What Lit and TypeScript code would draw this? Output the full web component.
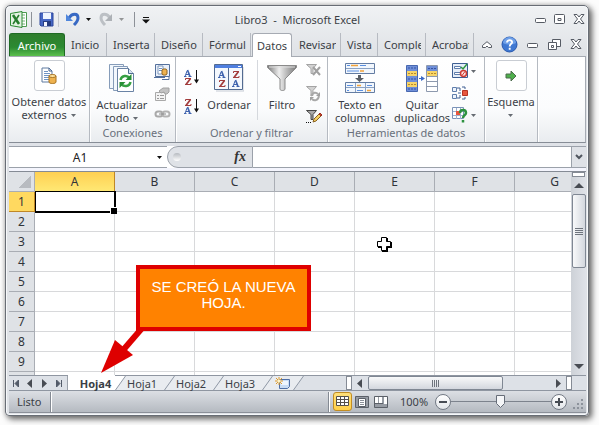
import { LitElement, html, css, svg, nothing } from "lit";
import { customElement } from "lit/decorators.js";
import { classMap } from "lit/directives/class-map.js";

const icon = (w: number, h: number, body: unknown) =>
  html`<svg width=${w} height=${h} viewBox="0 0 ${w} ${h}" aria-hidden="true">${body}</svg>`;

const caret = icon(7, 7, svg`<path d="M1 2h5L3.500 5z" fill="#666b72" />`);
const caretDark = icon(7, 7, svg`<path d="M1 2h5L3.500 5z" fill="#111" />`);

// Serif A: thin left leg, heavy right leg, small feet.
const letterA = (x: number, y: number) => svg`<g transform="translate(${x} ${y})" fill="none" stroke="#3f63ae">
  <path d="M1 6.500L3 1" /><path d="M3.500 0L6 6.500" stroke-width="1.700" /><path d="M0 6.500h2.500M4.500 6.500h3M2 4.500h3" /></g>`;
const letterZ = (x: number, y: number) => svg`<g transform="translate(${x} ${y})" fill="none" stroke="#a23c3c">
  <path d="M.5 2V.500H6" /><path d="M5.500.5L1 6.500" stroke-width="1.700" /><path d="M0 6.500h6V5" /></g>`;

const excelLogo = icon(17, 17, svg`
  <path d="M5 1.500h11.500v14H5z" fill="#fff" stroke="#4d9a50" />
  <path d="M12 4h3M12 7h3M12 10h3M12 13h3" stroke="#74b277" />
  <path d="M.5 2.500L12 .5v16L.5 14.500z" fill="#e4f2e3" stroke="#2f8b35" />
  <path d="M3 4l6 9" stroke="#277c2d" stroke-width="2.600" /><path d="M9 4L3 13" stroke="#277c2d" stroke-width="1.600" />`);
const save = icon(15, 15, svg`
  <path d="M1 1h13v13H2l-1-1z" fill="#4667c4" stroke="#2d479b" />
  <path d="M4 1h8v6H4z" fill="#eef4ff" /><path d="M4 9h8v5H4z" fill="#263c80" />
  <path d="M5 10h3v4H5z" fill="#f3f6ff" />`);
const undo = icon(14, 15, svg`
  <path d="M3 6C6 1 12 1 12 6c0 3-2 5-4 7" fill="none" stroke="#3869c4" stroke-width="3" />
  <path d="M0 2v7h7z" fill="#4f86dc" />`);
const redo = icon(14, 15, svg`
  <path d="M11 6C8 1 2 1 2 6c0 3 2 5 4 7" fill="none" stroke="#bcc0c5" stroke-width="3" />
  <path d="M13 2v7H6z" fill="#adb1b6" />`);
const customize = icon(8, 8, svg`<path d="M1 1.500h6" stroke="#111" /><path d="M0 3.500h8L4 7.500z" fill="#111" />`);

const cross = icon(12, 11, svg`
  <path d="M1 .5h3l2 2.500 2-2.500h3L7.500 5l3.500 4.500H8L6 7 4 9.500H1L4.500 5z" fill="#fff" stroke="#565b64" />`);
const minimize = icon(12, 11, svg`<rect x=".5" y="4.500" width="10" height="4" rx="1" fill="#fff" stroke="#565b64" />`);
const maximize = icon(12, 11, svg`
  <rect x=".5" y=".5" width="10" height="9" rx="1" fill="#fff" stroke="#565b64" /><path d="M4 4.500h3v2H4z" fill="#fff" stroke="#565b64" />`);
const restore = icon(13, 12, svg`
  <path d="M4.500.5h8v7h-8z" fill="#fff" stroke="#565b64" /><path d="M.5 3.500h8v7h-8z" fill="#fff" stroke="#565b64" />
  <path d="M3.500 6.500h2v2h-2z" fill="none" stroke="#565b64" />`);
const collapse = icon(10, 8, svg`<path d="M.5 6.500V4.500L5 .7l4.500 3.800v2h-3L5 5 3.500 6.500z" fill="#fff" stroke="#565b64" />`);
const help = icon(17, 17, svg`
  <circle cx="8.500" cy="8.500" r="7.500" fill="#3f78d2" stroke="#2858ad" />
  <path d="M2 7a6.500 6 0 0113 0c-4 2-9 2-13 0" fill="#6fa0e8" />
  <path d="M6 6.500c0-3.300 5.500-3 5 0C10.700 8 8.700 8 8.700 10.500M8.700 11.800v2" fill="none" stroke="#fff" stroke-width="1.900" />`);

const getData = icon(16, 18, svg`
  <path d="M1 1h7l3 3v11H1z" fill="#fff" stroke="#5f7ba0" /><path d="M8 1v3h3" fill="none" stroke="#3f5f8c" />
  <path d="M3 4.500h4M3 6.500h6M3 8.500h5M3 10.500h5M3 12.500h5" stroke="#6e93c4" />
  <path d="M8 9v6c0 2 7 2 7 0V9" fill="#eeb24f" stroke="#a87321" /><ellipse cx="11.500" cy="9" rx="3.500" ry="1.500" fill="#ffe3a0" stroke="#a87321" />`);
const refreshAll = icon(28, 30, svg`
  <path d="M1.500 1.500h14v24h-14z" fill="#f2f7fc" stroke="#869cb9" /><path d="M5.500 3.500h14v24h-14z" fill="#f2f7fc" stroke="#869cb9" />
  <path d="M9.500 5.500h11l5 5v18h-16z" fill="#fff" stroke="#6a83a5" /><path d="M20.500 5.500v5h5" fill="#d7e3f0" stroke="#4e6a90" />
  <path d="M12.500 17c1-5 7-5 9-2M22.500 19c-1 5-7 5-9 2" fill="none" stroke="#36a042" stroke-width="2.400" />
  <path d="M23.500 11v6h-6zM11.500 25v-6h6z" fill="#278f35" />`);
const connections = icon(17, 17, svg`
  <path d="M1.500 1.500h14v12h-14z" fill="#e9f0fa" stroke="#54709c" /><path d="M0 14.500h11M8 16.500h7v-3" fill="none" stroke="#54709c" />
  <path d="M4 3h5v8H4z" fill="#fff" stroke="#7d96ba" /><path d="M5 5.500h3M5 7.500h3" stroke="#6e93c4" />
  <path d="M8 7v4c0 1.500 5 1.500 5 0V7c0-1.500-5-1.500-5 0" fill="#eeb24f" stroke="#8f6420" />`);
const properties = icon(17, 15, svg`
  <path d="M1.500 5.500h10v8h-10z" fill="#f3f3f3" stroke="#a9a9a9" /><path d="M3 8.500h2M6 8.500h4M3 11.500h2M6 11.500h4" stroke="#999" />
  <path d="M5 4l4-3h6v4l-2 2h-2l-1-2-3 1z" fill="#c3c3c3" stroke="#a2a2a2" />`);
const links = icon(17, 10, svg`
  <rect x="1.500" y="2.500" width="7" height="5" rx="2.500" fill="none" stroke="#a9a9a9" stroke-width="2" />
  <rect x="8.500" y="2.500" width="7" height="5" rx="2.500" fill="none" stroke="#b3b3b3" stroke-width="2" /><path d="M5 5h7" stroke="#888" />`);
const arrowDown = svg`<path d="M12.500 1v12" stroke="#111" /><path d="M10 10.500h5l-2.500 4z" fill="#111" />`;
const sortAsc = icon(17, 17, svg`${letterA(0, 1)}${letterZ(1, 9)}${arrowDown}`);
const sortDesc = icon(17, 17, svg`${letterZ(1, 1)}${letterA(0, 9)}${arrowDown}`);
const sort = icon(30, 28, svg`
  <path d="M2 27h28V3" fill="none" stroke="#c5cbd4" />
  <path d="M.5.5h28v25H.5z" fill="#f4f8fd" stroke="#536b91" /><path d="M1 1h27v3H1z" fill="#4f7fe0" /><path d="M24 2.500h3" stroke="#fff" />
  <path d="M14.500 4v21" stroke="#536b91" />${letterA(4, 7)}${letterZ(5, 16)}${letterZ(19, 7)}${letterA(18, 16)}`);
const filter = icon(31, 27, svg`
  <defs><linearGradient id="fu"><stop offset="0" stop-color="#777" /><stop offset=".4" stop-color="#eee" /><stop offset="1" stop-color="#777" /></linearGradient></defs>
  <path d="M.5.500h29v2L18 14v10c0 2-5 2-5 0V14L.5 2.500z" fill="url(#fu)" stroke="#8a8a8a" />
  <path d="M2 2h26" stroke="#ddd" />`);
const miniFunnel = (c: string, f: string) => svg`<path d="M.5 1.500h10L7 5.500v5H5v-5z" fill="${f}" stroke="${c}" />`;
const filterClear = icon(16, 15, svg`${miniFunnel("#a4a4a4", "#d2d2d2")}<path d="M7 4l7 8M14 4l-7 8" stroke="#a0a0a0" stroke-width="2" />`);
const filterAgain = icon(16, 17, svg`${miniFunnel("#a4a4a4", "#d2d2d2")}
  <path d="M5 11c2-4 5-4 7-2M13 11c-1 5-5 5-7 3" fill="none" stroke="#a8a8a8" stroke-width="2" /><path d="M14 7v4h-4zM4 16v-4h4z" fill="#a0a0a0" />`);
const filterAdvanced = icon(17, 15, svg`${miniFunnel("#444", "#aaa")}
  <path d="M0 13.500h1M2 13.500h1M4 13.500h1" stroke="#111" /><path d="M7 13l1-3 5-5 2 2-5 5z" fill="#f4ce62" stroke="#8a6423" />
  <path d="M13 5l1-1 2 2-1 1z" fill="#c8462e" stroke="#a03020" />`);
const textColumns = icon(31, 31, svg`
  <path d="M.5.5h29v10H.5zM.5 19.500h29v10H.5z" fill="#f2f7fd" stroke="#647da3" /><path d="M1 5.500h28M1 24.500h28M10.500 20v9M20.500 20v9" stroke="#8ba2c3" />
  <path d="M2 2.500h3M15 2.500h6M2 8h12" stroke="#5a8fe0" /><path d="M6 2.500h7M15 8h4" stroke="#f2a33a" stroke-width="1.500" />
  <path d="M2 22.500h6M22 22.500h5M12 27.500h6M2 27.500h2" stroke="#5a8fe0" /><path d="M12 22.500h4M22 27.500h4" stroke="#f2a33a" stroke-width="1.500" />
  <path d="M13 12h3v3h3l-4.500 4L10 15h3z" fill="#5a5f66" />`);
const dedupe = icon(33, 27, svg`
  <path d="M.5.500h11v26H.5z" fill="#6f8fd8" stroke="#4868b0" /><path d="M1 6h10v5H1zM1 17h10v5H1z" fill="#f8d568" />
  <path d="M2 3h8M2 14h8M2 24h8" stroke="#3552a4" stroke-dasharray="2 1" /><path d="M2 8.500h8M2 19.500h8" stroke="#b98d2c" stroke-dasharray="2 1" />
  <path d="M13 13.500h3" stroke="#3a6ac8" /><path d="M15 11l4 2.500-4 2.500z" fill="#3a6ac8" />
  <path d="M20.500.5h11v26h-11z" fill="#fff" stroke="#8d99ae" /><path d="M21 1h10v5H21z" fill="#6f8fd8" /><path d="M21 6h10v5H21z" fill="#f8d568" />
  <path d="M22 3.500h8" stroke="#3552a4" stroke-dasharray="2 1" /><path d="M22 8.500h8" stroke="#b98d2c" stroke-dasharray="2 1" />
  <path d="M21 11.500h10M21 16.500h10M21 21.500h10" stroke="#8d99ae" />`);
const validation = icon(16, 16, svg`
  <path d="M.5.5h15v14H.5z" fill="#e6eef8" stroke="#3e5f92" /><path d="M2.500 3.500h6v2h-6zM2.500 9.500h6v2h-6z" fill="#fff" stroke="#5f7eac" />
  <path d="M9 4l2 2 4-5" fill="none" stroke="#2e9940" stroke-width="1.500" /><circle cx="11.500" cy="10.500" r="3" fill="#fbe3e0" stroke="#cf3a30" stroke-width="1.500" /><path d="M10 12.500l3-4" stroke="#cf3a30" />`);
const consolidate = icon(16, 14, svg`
  <path d="M.5 1.500h4v4h-4zM.5 8.500h4v4h-4z" fill="#eef4fc" stroke="#5f7eac" /><path d="M5 2h3v3M5 12h3V9M6 7h3" fill="none" stroke="#3e5f92" />
  <path d="M10.500 4.500h5v5h-5z" fill="#e8573f" stroke="#b53424" /><path d="M10 1h3v2M10 13h3v-2" fill="none" stroke="#3e5f92" />`);
const whatIf = icon(16, 16, svg`
  <path d="M.5.500h11v11H.5z" fill="#fff" stroke="#7b93b8" /><path d="M1 4.500h10M1 8.500h10M4.500 1v11M8.500 1v11" stroke="#9db0cc" /><path d="M4 4h4v4H4z" fill="#e8573f" />
  <path d="M8 6c0-4 6-4 6 0 0 2-3 2-3 5M11 13v2.500" fill="none" stroke="#2d9240" stroke-width="2.500" />`);
const outline = icon(12, 12, svg`<path d="M1 4h5V1l5 5-5 5V8H1z" fill="#4fb04c" stroke="#4c6b4c" />`);
const newSheet = icon(17, 13, svg`
  <path d="M4.500 2.500h10v7l-2 2h-8z" fill="#c9dcf5" stroke="#4f6ea6" /><path d="M6 4h7v4H6z" fill="#eef5ff" />
  <path d="M4 0v8M0 4h8M1 1l6 6M7 1L1 7" stroke="#e09a28" /><circle cx="4" cy="4" r="1.500" fill="#fff6c8" />`);

const tri = (dir: "left" | "right" | "up" | "down") => {
  const d = { left: "M7 1v9L2 5.500z", right: "M3 1v9l5-4.500z", up: "M0 8h10L5 3z", down: "M0 3h10L5 8z" }[dir];
  return icon(10, 11, svg`<path d="${d}" fill="#484c53" />`);
};
const edge = (dir: "first" | "last") => icon(10, 11, dir === "first"
  ? svg`<path d="M2.500 2v7M7.500 2v7L4 5.500z" fill="#535b69" stroke="#535b69" />`
  : svg`<path d="M7.500 2v7M2.500 2v7L6 5.500z" fill="#535b69" stroke="#535b69" />`);
const slash = (left: string, right: string) => icon(11, 14, svg`
  <path d="M0 0h11L1 14H0z" fill="${left}" /><path d="M11 0v14H1z" fill="${right}" /><path d="M.5 14L10.500 0" stroke="#8f98a5" />`);

const viewNormal = icon(17, 17, svg`
  <path d="M2.500 3.500h12v9h-12z" fill="#fff" stroke="#55504a" /><path d="M3 6.500h12M3 9.500h12M6.500 4v9M10.500 4v9" stroke="#55504a" />`);
const viewLayout = icon(14, 12, svg`
  <path d="M.5.500h13v11H.5z" fill="#979ca4" stroke="#5b6068" /><path d="M3.500 2.500h7v8h-7z" fill="#fff" stroke="#5b6068" /><path d="M5 4.500h4M5 6.500h4M5 8.500h4" stroke="#8b9098" />`);
const viewBreaks = icon(14, 12, svg`
  <path d="M.5.500h13v11H.5z" fill="#979ca4" stroke="#5b6068" /><path d="M1 1h3v6H1zM5 1h3v6H5zM10 1h3v7h-3z" fill="#fff" /><path d="M1 7.500h8" stroke="#5b6068" />`);

const columns = ["A", "B", "C", "D", "E", "F", "G"];
const rows = Array.from({ length: 10 }, (_, i) => i + 1);
const tabs = [
  { label: "Inicio", size: "narrow" }, { label: "Insertar", size: "wide" }, { label: "Diseño", size: "wide" },
  { label: "Fórmul", size: "wide" }, { label: "Datos", size: "active" }, { label: "Revisar", size: "wide" },
  { label: "Vista", size: "small" }, { label: "Comple", size: "wide" }, { label: "Acrobat", size: "wide" },
];
const sheets = ["Hoja1", "Hoja2", "Hoja3"];

@customElement("app-root")
export class AppRoot extends LitElement {
  static styles = css`
    :host { display: block; height: 100vh; box-sizing: border-box; padding: 5px 10px 9px 5px; background: #fcfcfc;
      font: 11px/13px "Noto Sans", "Open Sans", sans-serif; color: #3b3f46; overflow: hidden; }
    * { box-sizing: border-box; }
    svg { display: block; flex: none; }
    button, input { font: inherit; color: inherit; border: 0; background: none; padding: 0; margin: 0; border-radius: 0; outline: 0; }
    button { display: flex; align-items: center; justify-content: center; flex: none; }
    .window { height: 100%; display: flex; flex-direction: column; border: 1px solid #686d75; border-radius: 5px 5px 4px 4px;
      padding: 0 2px 2px 3px; background: linear-gradient(#f0f2f4, #dfe2e6 50px, #dfe2e7); box-shadow: inset 0 0 0 1px #f6f8fa, 3px 3px 6px #666, 0 0 5px #bbb; }
    .title { height: 27px; display: grid; grid-template-columns: 1fr auto 1fr; align-items: center; flex: none; }
    .title h1 { font: inherit; margin: 0; white-space: pre; }
    .quick { display: flex; align-items: center; padding-left: 1px; }
    .quick .bar { width: 1px; height: 15px; background: #8d9198; margin: 0 7px 0 4px; }
    .quick .arrow { width: 17px; }
    .quick .redo { margin-left: 2px; }
    .faded { opacity: .4; }
    .controls { display: flex; justify-content: flex-end; align-items: center; gap: 7px; padding-right: 1px; }
    .tabs { height: 24px; display: flex; align-items: stretch; flex: none; border-bottom: 1px solid #a6abb3; }
    .tab { height: 23px; border-right: 1px solid #b7bbc2; justify-content: flex-start; padding: 0 0 0 6px; }
    .tab span { overflow: hidden; white-space: nowrap; }
    .file { width: 56px; justify-content: center; color: #fff; border: 1px solid #1f6a24; border-bottom: 0; border-radius: 3px 3px 0 0;
      background: linear-gradient(#2f7d2d, #2b8a32 60%, #5cbf4d); padding: 0; }
    .narrow { width: 42px; } .small { width: 37px; } .wide { width: 48px; }
    .wide { padding-right: 4px; }
    .active { width: 40px; height: 24px; margin: 0 1px; background: #fff; border: 1px solid #a6abb3; border-bottom: 0; border-radius: 3px 3px 0 0; padding: 0 0 0 4px; }
    .tools { flex: 1; display: flex; align-items: center; justify-content: flex-end; gap: 9px; padding-right: 4px; }
    .ribbon { height: 86px; flex: none; display: flex; background: linear-gradient(#fff, #fbfcfd 60%, #e9ecef); border-bottom: 1px solid #878d96; border-right: 1px solid #a6abb3; }
    .group { display: flex; flex-direction: column; border-right: 1px solid #b5bac1; box-shadow: 1px 0 #fff; padding-top: 3px; flex: none; }
    .g1 { width: 81px; } .g2 { width: 86px; } .g3 { width: 152px; } .g4 { width: 157px; } .g5 { width: 53px; }
    .body { flex: 1; display: flex; }
    .name { height: 17px; margin: 0; line-height: 15px; text-align: center; color: #69707c; white-space: nowrap; }
    .big { flex-direction: column; justify-content: flex-start; align-self: flex-start; text-align: center; white-space: nowrap; padding-top: 2px; }
    .big .art { height: 32px; display: flex; align-items: center; margin-bottom: 4px; }
    .big svg { display: inline-block; }
    .boxed { padding-top: 0; width: 100%; }
    .boxed .art { width: 31px; height: 31px; justify-content: center; border: 1px solid #c9cdd3; border-radius: 3px; background: #fff; }
    .stack { display: flex; flex-direction: column; align-items: flex-start; gap: 7px; padding-top: 3px; }
    .stack button { gap: 2px; }
    .loose { gap: 12px; padding: 9px 0 0 8px; }
    .w64 { width: 64px; } .w56 { width: 56px; } .w60 { width: 60px; } .w48 { width: 48px; }
    .rule { width: 1px; height: 60px; background: #d5d8dd; }
    .formula { height: 28px; padding-top: 3px; flex: none; display: flex; background: linear-gradient(#dfe2e7 25px, #f4f5fd 25px); }
    .field { background: #fff; border-top: 1px solid #9ba1aa; border-bottom: 1px solid #9ba1aa; font-size: 12px; height: 22px; min-width: 0; }
    .cell { width: 142px; text-align: center; color: #222; }
    .pick { width: 16px; height: 22px; background: #fff; border-top: 1px solid #9ba1aa; border-bottom: 1px solid #9ba1aa; }
    .fx { flex: none; width: 86px; height: 22px; display: flex; align-items: center; justify-content: space-between; padding: 0 6px 0 5px;
      border: 1px solid #9ba1aa; border-radius: 11px 0 0 11px; background: #dfe2e7; }
    .fxwrap { height: 22px; background: linear-gradient(90deg, #fff 11px, transparent 11px); }
    .dot { width: 8px; height: 8px; border-radius: 4px; background: linear-gradient(#b6bac0, #fff); }
    .fx i { font: italic bold 14px/20px "Liberation Serif", serif; color: #333; }
    .formula .text { flex: 1; }
    .expand { width: 15px; height: 22px; border: 1px solid #9ba1aa; border-right: 0; }
    .work { flex: 1; min-height: 0; display: flex; border-top: 1px solid #858b95; }
    .sheet { flex: 1; min-width: 0; position: relative; overflow: hidden; background: #fff; }
    table { border-spacing: 0; table-layout: fixed; width: 586px; font-size: 12px; color: #30343a; }
    col { width: 80px; } .rowcol { width: 26px; }
    th, td { height: 20px; padding: 0; border: solid #d8d9db; border-width: 0 1px 1px 0; font-weight: 400; line-height: 17px; }
    th { background: #dfe2e6; border-color: #a9adb4; text-align: center; }
    .corner { background: linear-gradient(135deg, transparent 50%, #b8bbc0 50%) 10px 4px / 12px 12px no-repeat #dfe2e6; }
    .picked { background: linear-gradient(#ffd052, #ffe874); border-color: #bf8726; }
    .rowpicked { background: #ffd960; border-color: #bf8726; }
    .current { position: relative; }
    .current::before { content: ""; position: absolute; inset: -1px -2px -2px 0; border: 2px solid #000; border-width: 1px 2px 2px 1px; }
    .current::after { content: ""; position: absolute; right: -3px; bottom: -3px; width: 6px; height: 6px; background: #000; border: solid #fff; border-width: 1px 0 0 1px; }
    .cursor { position: absolute; left: 367px; top: 65px; }
    .note { position: absolute; left: 127px; top: 93px; width: 175px; height: 66px; margin: 0; padding-top: 10px; background: #ff8200; border: 4px solid #de0000;
      color: #fff; font: 15px/16px "Liberation Sans", sans-serif; text-align: center; }
    .pointer { position: absolute; left: 91px; top: 154px; }
    .vscroll { width: 15px; flex: none; display: flex; flex-direction: column; align-items: center; background: linear-gradient(90deg, #cdd1d7, #dfe2e8); }
    .vscroll .split { width: 13px; height: 5px; border: 1px solid #858b95; background: #fff; }
    .vscroll button { height: 17px; width: 100%; }
    .vthumb { width: 14px; height: 74px; border: 1px solid #7f8793; border-radius: 2px; background: linear-gradient(90deg, #f8f9fa, #d3d7de); display: flex; align-items: center; justify-content: center; }
    .space { flex: 1; }
    .sheets { height: 16px; flex: none; display: flex; border-top: 1px solid #8f96a1; border-bottom: 1px solid #8f96a1; background: #dde1e7; }
    .sheets > button { height: 14px; }
    .nav { width: 14px; }
    .navend { border-right: 1px solid #9ba1aa; width: 17px; }
    .sheets .open { width: 47px; background: #fff; font-weight: 700; padding-left: 8px; box-shadow: 0 -1px #fff; }
    .sheets .other { width: 38px; background: #e9ecf0; justify-content: flex-start; padding-left: 1px; }
    .sheets .fresh { width: 20px; background: #e9ecf0; }
    .hscroll { width: 240px; display: flex; align-items: center; flex: none; }
    .hsplit { width: 6px; height: 14px; border: 1px solid #858b95; background: #fff; flex: none; }
    .hscroll button { width: 16px; height: 14px; }
    .hthumb { width: 135px; height: 14px; border: 1px solid #7f8793; border-radius: 2px; background: linear-gradient(#f8f9fa, #d3d7de); display: flex; align-items: center; justify-content: center; }
    .status { height: 22px; flex: none; display: flex; align-items: center; background: linear-gradient(#dcdfe4, #b5bac1); border-bottom: 1px solid #8b9099; padding-left: 8px; }
    .ready { width: 33px; }
    .div { width: 2px; height: 20px; background: #848a93; border-right: 1px solid #fff; flex: none; }
    .views { display: flex; align-items: center; gap: 5px; padding-left: 3px; }
    .views .on { width: 19px; height: 19px; border: 1px solid #c38d22; border-radius: 3px; background: linear-gradient(#ffe07a, #ffd04a); margin-right: -2px; }
    .zoom { display: flex; align-items: center; padding: 0 1px 0 12px; }
    .zoom label { width: 35px; }
    .round { width: 16px; height: 16px; border: 1px solid #737a85; border-radius: 8px; background: linear-gradient(#fff, #e2e5e9); }
    .range { appearance: none; width: 100px; height: 16px; background: linear-gradient(#7d838d, #7d838d) center / 100% 1px no-repeat; }
    .range::-webkit-slider-thumb { appearance: none; width: 10px; height: 13px;
      background: url("data:image/svg+xml,%3Csvg xmlns='http://www.w3.org/2000/svg' width='10' height='13'%3E%3Cpath d='M.5.5h8v8l-4 4-4-4z' fill='%23f5f6f8' stroke='%23666d78'/%3E%3C/svg%3E") no-repeat; }
    .grip { align-self: flex-end; margin-left: 6px; }
  `;

  private big(cls: string, art: unknown, label: unknown) {
    return html`<button class="big ${cls}"><span class="art">${art}</span><span>${label}</span></button>`;
  }

  private small(art: unknown, label: string, more = false) {
    return html`<button aria-label=${label}>${art}${more ? caret : nothing}</button>`;
  }

  private group(cls: string, name: string, body: unknown) {
    return html`<section class="group ${cls}"><div class="body">${body}</div><p class="name">${name}</p></section>`;
  }

  private ribbon() {
    return html`<div class="ribbon">
      ${this.group("g1", "", this.big("boxed", getData, html`Obtener datos<br />externos ${caret}`))}
      ${this.group("g2", "Conexiones", html`
        ${this.big("w64", refreshAll, html`Actualizar<br />todo ${caret}`)}
        <div class="stack">${this.small(connections, "Conexiones")}${this.small(properties, "Propiedades")}${this.small(links, "Editar vínculos")}</div>`)}
      ${this.group("g3", "Ordenar y filtrar", html`
        <div class="stack loose">${this.small(sortAsc, "Ordenar de A a Z")}${this.small(sortDesc, "Ordenar de Z a A")}</div>
        ${this.big("w56", sort, "Ordenar")}<div class="rule"></div>${this.big("w48", filter, "Filtro")}
        <div class="stack">${this.small(filterClear, "Borrar")}${this.small(filterAgain, "Volver a aplicar")}${this.small(filterAdvanced, "Avanzadas")}</div>`)}
      ${this.group("g4", "Herramientas de datos", html`
        ${this.big("w64", textColumns, html`Texto en<br />columnas`)}${this.big("w60", dedupe, html`Quitar<br />duplicados`)}
        <div class="stack">${this.small(validation, "Validación de datos", true)}${this.small(consolidate, "Consolidar")}${this.small(whatIf, "Análisis Y si", true)}</div>`)}
      ${this.group("g5", "", this.big("boxed", outline, html`Esquema<br />${caret}`))}
    </div>`;
  }

  private grid() {
    return html`<table>
      <colgroup><col class="rowcol" />${columns.map(() => html`<col />`)}</colgroup>
      <thead><tr><th class="corner"></th>${columns.map((c, i) => html`<th scope="col" class=${classMap({ picked: i === 0 })}>${c}</th>`)}</tr></thead>
      <tbody>${rows.map((r) => html`<tr><th scope="row" class=${classMap({ rowpicked: r === 1 })}>${r}</th>
        ${columns.map((_, i) => html`<td class=${classMap({ current: r === 1 && i === 0 })}></td>`)}</tr>`)}</tbody>
    </table>`;
  }

  render() {
    return html`<main class="window">
      <header class="title">
        <div class="quick">${excelLogo}<span class="bar"></span>
          <button aria-label="Guardar">${save}</button><span class="bar faded"></span>
          <button aria-label="Deshacer">${undo}</button><button class="arrow" aria-label="Lista de deshacer">${caretDark}</button>
          <button class="redo" aria-label="Rehacer">${redo}</button><button class="arrow faded" aria-label="Lista de rehacer">${caretDark}</button>
          <span class="bar"></span><button aria-label="Personalizar">${customize}</button>
        </div>
        <h1>Libro3  -  Microsoft Excel</h1>
        <div class="controls"><button aria-label="Minimizar">${minimize}</button><button aria-label="Maximizar">${maximize}</button><button aria-label="Cerrar">${cross}</button></div>
      </header>
      <nav class="tabs">
        <button class="tab file">Archivo</button>
        ${tabs.map((t) => html`<button class="tab ${t.size}"><span>${t.label}</span></button>`)}
        <div class="tools"><button aria-label="Minimizar la cinta">${collapse}</button><button aria-label="Ayuda">${help}</button>
          <button aria-label="Minimizar libro">${minimize}</button><button aria-label="Restaurar libro">${restore}</button><button aria-label="Cerrar libro">${cross}</button></div>
      </nav>
      ${this.ribbon()}
      <div class="formula">
        <input class="field cell" aria-label="Cuadro de nombres" value="A1" /><button class="pick" aria-label="Nombres">${caretDark}</button>
        <div class="fxwrap"><button class="fx" aria-label="Insertar función"><span class="dot"></span><i>fx</i></button></div>
        <input class="field text" aria-label="Barra de fórmulas" />
        <button class="expand" aria-label="Expandir">${icon(8, 7, svg`<path d="M1 1l3 3 3-3" fill="none" stroke="#50565f" stroke-width="2" />`)}</button>
      </div>
      <div class="work">
        <div class="sheet">${this.grid()}
          <svg class="pointer" width="46" height="48" viewBox="0 0 46 48" aria-hidden="true"><path d="M43 1L18 30" stroke="#de0000" stroke-width="6" /><path d="M1 47L15 14 33 29z" fill="#de0000" /></svg>
          <p class="note">SE CREÓ LA NUEVA HOJA.</p>
          <svg class="cursor" width="17" height="17" viewBox="0 0 17 17" aria-hidden="true"><path d="M6 1h6v4h4v6h-4v4H6v-4H2V6h4z" fill="#000" /><path d="M5.500.5h5v4h4v5h-4v4h-5v-4h-4v-5h4z" fill="#fff" stroke="#000" /></svg>
        </div>
        <div class="vscroll"><div class="split"></div><button aria-label="Subir">${tri("up")}</button>
          <div class="vthumb">${icon(8, 9, svg`<path d="M0 1.500h8M0 3.500h8M0 5.500h8M0 7.500h8" stroke="#6e747d" />`)}</div>
          <div class="space"></div><button aria-label="Bajar">${tri("down")}</button></div>
      </div>
      <div class="sheets">
        <button class="nav" aria-label="Primera hoja">${edge("first")}</button><button class="nav" aria-label="Hoja anterior">${tri("left")}</button>
        <button class="nav" aria-label="Hoja siguiente">${tri("right")}</button><button class="nav navend" aria-label="Última hoja">${edge("last")}</button>
        <button class="open">Hoja4</button>${slash("#fff", "#e9ecf0")}
        ${sheets.map((s) => html`<button class="other">${s}</button>${slash("#e9ecf0", "#e9ecf0")}`)}
        <button class="fresh" aria-label="Insertar hoja">${newSheet}</button>${slash("#e9ecf0", "#dde1e7")}
        <div class="space"></div>
        <div class="hscroll"><span class="hsplit"></span><button aria-label="Izquierda">${tri("left")}</button>
          <div class="hthumb">${icon(8, 7, svg`<path d="M.5 0v7M2.500 0v7M4.500 0v7M6.500 0v7" stroke="#6e747d" />`)}</div>
          <div class="space"></div><button aria-label="Derecha">${tri("right")}</button><span class="hsplit"></span><span class="nav"></span></div>
      </div>
      <footer class="status">
        <span class="ready">Listo</span><span class="div"></span><span class="space"></span><span class="div"></span>
        <div class="views"><button class="on" aria-label="Normal">${viewNormal}</button><button aria-label="Diseño de página">${viewLayout}</button><button aria-label="Vista previa de salto">${viewBreaks}</button></div>
        <div class="zoom"><label for="zoom">100%</label>
          <button class="round" aria-label="Alejar">${icon(10, 10, svg`<path d="M1 5h8" stroke="#474c54" stroke-width="2" />`)}</button>
          <input class="range" id="zoom" type="range" min="0" max="200" value="100" />
          <button class="round" aria-label="Acercar">${icon(10, 10, svg`<path d="M1 5h8M5 1v8" stroke="#474c54" stroke-width="2" />`)}</button>
          <span class="grip">${icon(12, 12, svg`<path d="M8 1h2v2H8zM4 5h2v2H4zM8 5h2v2H8zM0 9h2v2H0zM4 9h2v2H4zM8 9h2v2H8z" fill="#8c929b" />`)}</span></div>
      </footer>
    </main>`;
  }
}
